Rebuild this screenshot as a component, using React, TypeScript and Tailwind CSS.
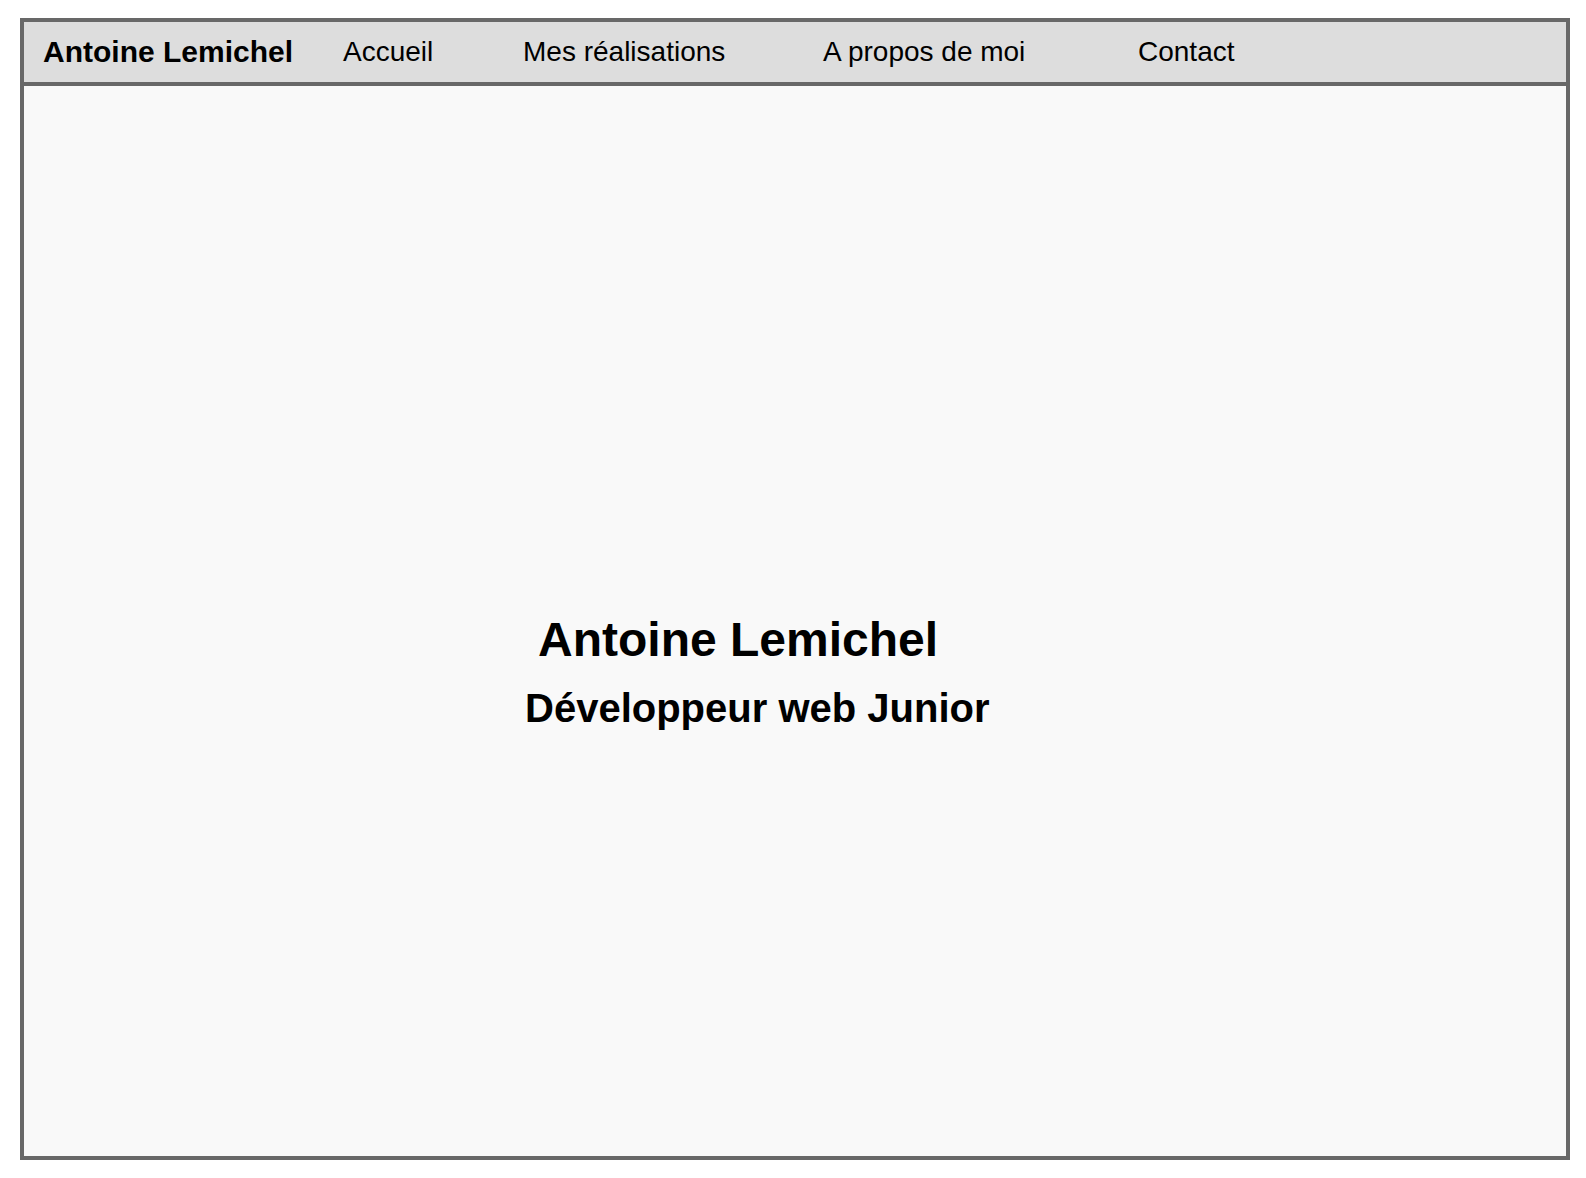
export default function App() {
  const links = [
    { label: 'Accueil', w: 'w-[180px]' },
    { label: 'Mes réalisations', w: 'w-[300px]' },
    { label: 'A propos de moi', w: 'w-[315px]' },
    { label: 'Contact', w: 'w-auto' },
  ];

  return (
    <div className="min-h-screen bg-white pl-[20px] pt-[18px] font-['Liberation_Sans',Arial,sans-serif] text-black">
      <div className="flex h-[1142px] w-[1550px] flex-col border-4 border-[#686868] bg-[#f9f9f9]">
        <header className="flex h-[64px] shrink-0 items-center border-b-4 border-[#686868] bg-[#dddddd] pl-[19px]">
          <a href="#" className="w-[300px] text-[30px] font-bold leading-none">
            Antoine Lemichel
          </a>
          <nav className="flex items-center">
            {links.map((link) => (
              <a key={link.label} href="#" className={`${link.w} text-[28px] leading-none`}>
                {link.label}
              </a>
            ))}
          </nav>
        </header>
        <main className="flex flex-1 flex-col pt-[530px]">
          <h1 className="ml-[514px] text-[48px] font-bold leading-none">Antoine Lemichel</h1>
          <h2 className="ml-[501px] mt-[24px] text-[40px] font-bold leading-none">
            Développeur web Junior
          </h2>
        </main>
      </div>
    </div>
  );
}
